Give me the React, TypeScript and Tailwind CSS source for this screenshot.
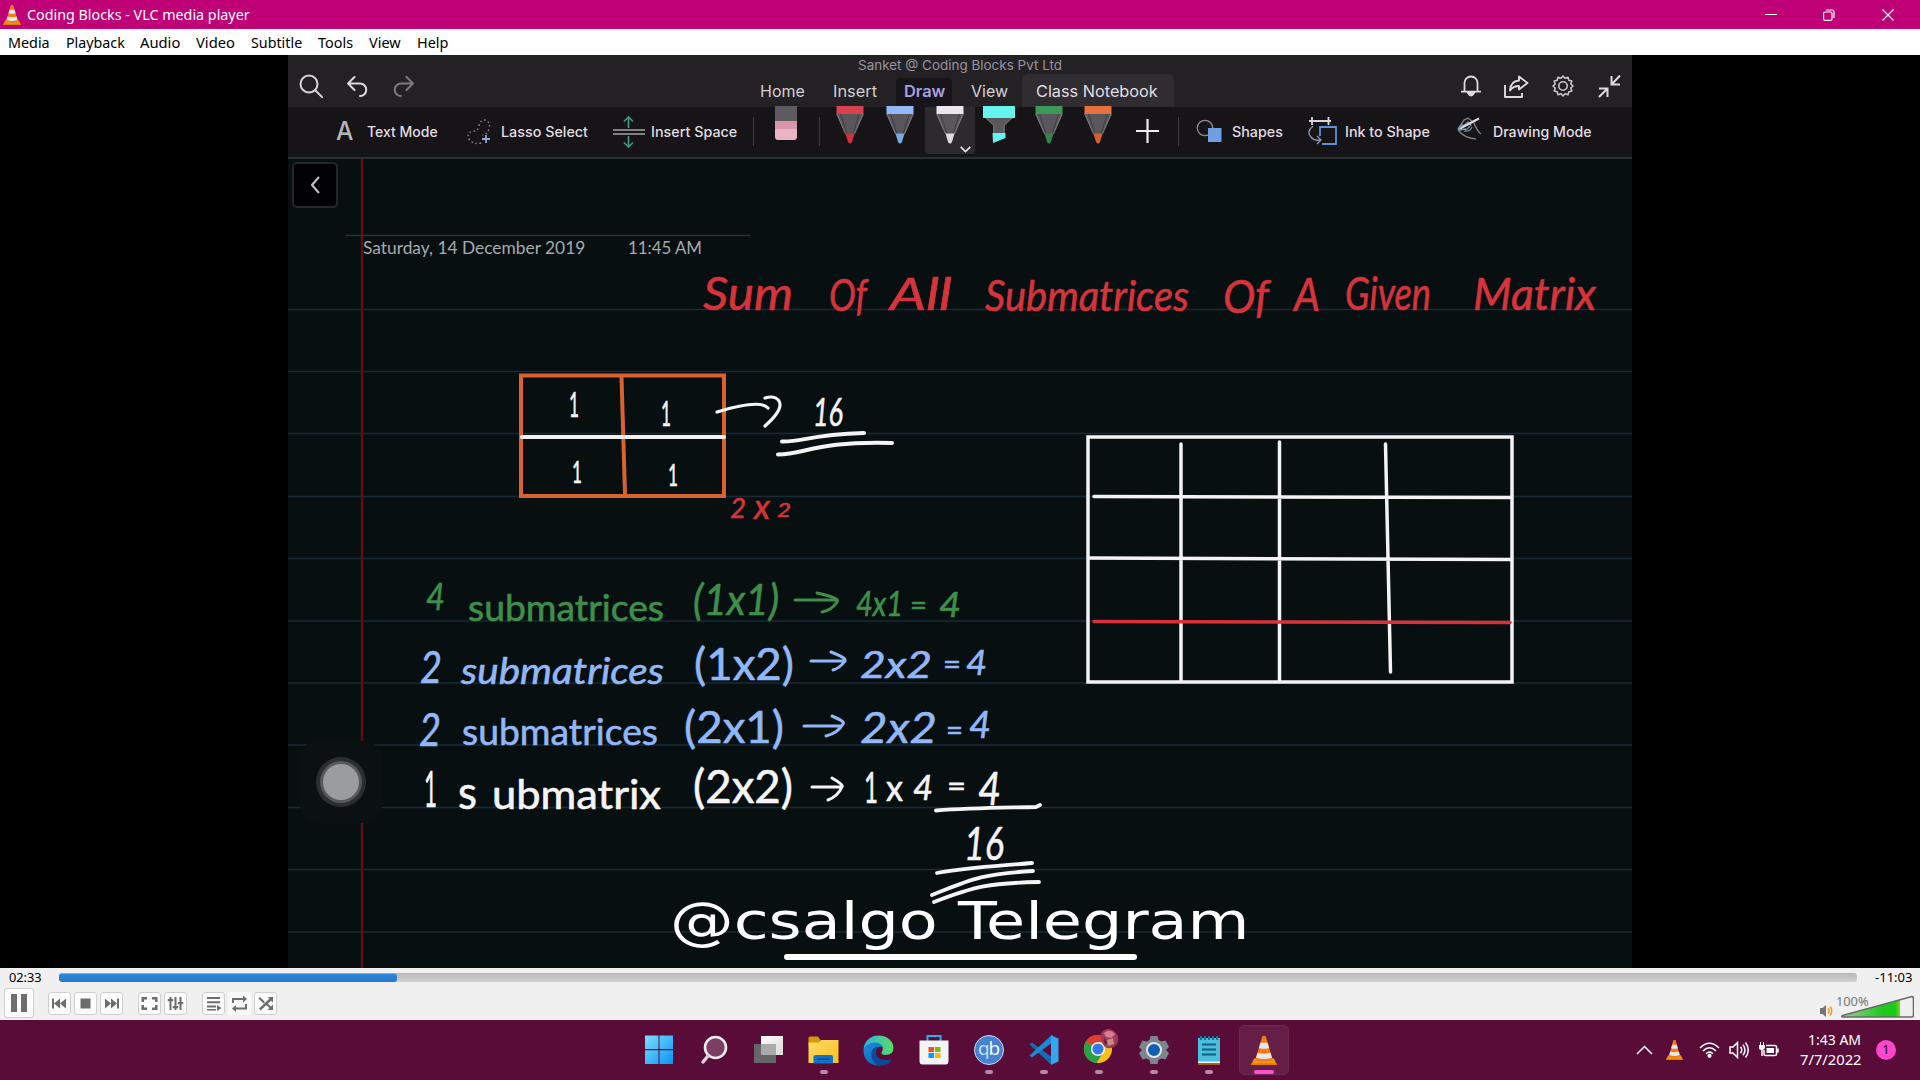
import React, { useLayoutEffect, useRef, useState } from "react";

/* Single line of text stretched to exactly the width of its box. */
function Fit({ children, className = "" }: { children: string; className?: string }) {
  const box = useRef<HTMLSpanElement>(null);
  const inner = useRef<HTMLSpanElement>(null);
  const [scale, setScale] = useState(1);
  useLayoutEffect(() => {
    if (box.current && inner.current) {
      const n = inner.current.offsetWidth;
      if (n) setScale(box.current.offsetWidth / n);
    }
  }, []);
  return (
    <span ref={box} className={"block shrink-0 whitespace-nowrap " + className}>
      <span ref={inner} className="inline-block origin-left" style={{ transform: `scaleX(${scale})` }}>
        {children}
      </span>
    </span>
  );
}

function Cone({ className = "" }: { className?: string }) {
  return (
    <svg viewBox="0 0 24 34" preserveAspectRatio="none" className={"shrink-0 " + className}>
      <path d="M3 26h18l3 8H0z" fill="#f39317" />
      <path d="M0 32h24v2H0z" fill="#e27a05" />
      <path d="M10.500 0h3L20 28q-8 4-16 0z" fill="#f47b13" />
      <path d="M8.700 8h6.600l1.400 6q-4.700 2-9.400 0zM6 19.500q6 2.500 12 0l1.400 6q-7.400 3-14.800 0z" fill="#e4e8ea" />
    </svg>
  );
}

const PENS = {
  red: ["#d9414f", "#d2303c"],
  blue: ["#93b9fb", "#7ba9e0"],
  white: ["#eee6ef", "#dedade"],
  green: ["#3d9a56", "#35824a"],
  orange: ["#e8703a", "#d65f2b"],
};

function Pen({ color }: { color: keyof typeof PENS }) {
  const [band, tip] = PENS[color];
  return (
    <svg width="28" height="38" viewBox="0 0 28 38" className="-mt-px shrink-0">
      <path d="M0 8h28L18.500 28h-9z" fill="#59575b" />
      <path d="M1 8l8.500 20M27 8l-8.500 20" stroke="#7b797d" strokeWidth="1" />
      <path d="M4.500 8l6.500 20M23.500 8L17 28" stroke="#3f3d41" strokeWidth="1" />
      <path d="M.5 0h27v8H.5z" fill={band} />
      <path d="M9.500 27.500h9L16 36q-2 3-4 0z" fill={tip} />
    </svg>
  );
}

function VideoHeader() {
  return (
    <div className="flex h-[52px] shrink-0 bg-[#232124] font-['Inter']">
      <div className="flex w-[472px] items-center pl-[11px] pt-[10px]">
        <svg width="24" height="24" viewBox="0 0 24 24" fill="none" stroke="#d6d3d8" strokeWidth="2" strokeLinecap="round">
          <circle cx="10" cy="10" r="8.500" />
          <path d="M16.500 16.500L23 23" />
        </svg>
        <svg width="21" height="21" viewBox="0 0 21 21" className="ml-[24px]" fill="none" stroke="#dedbe0" strokeWidth="2" strokeLinecap="round" strokeLinejoin="round">
          <path d="M7.500 1L1 7.500L7.500 14M1 7.500h12a6.200 6.200 0 0 1 0 12.500" />
        </svg>
        <svg width="21" height="21" viewBox="0 0 21 21" className="ml-[25px]" fill="none" stroke="#7c7a7e" strokeWidth="2" strokeLinecap="round" strokeLinejoin="round">
          <path d="M13.500 1L20 7.500L13.500 14M20 7.500H8a6.200 6.200 0 0 0 0 12.500" />
        </svg>
      </div>
      <div className="flex w-[460px] flex-col">
        <Fit className="ml-[98px] h-[19px] w-[204px] text-[13px] leading-[20px] text-[#98949f]">Sanket @ Coding Blocks Pvt Ltd</Fit>
        <div className="flex h-[33px] items-end text-[16px] leading-[22px] text-[#d3d0d5]">
          <Fit className="mb-[5px] w-[45px]">Home</Fit>
          <Fit className="mb-[5px] ml-[28px] w-[44px]">Insert</Fit>
          <div className="ml-[19px] flex h-[29px] w-[56px] items-end justify-center rounded-t bg-[#171519] font-semibold text-[#a9a0e0]">
            <Fit className="mb-[5px] w-[41px]">Draw</Fit>
          </div>
          <Fit className="mb-[5px] ml-[19px] w-[37px]">View</Fit>
          <div className="ml-[14px] flex h-[33px] w-[152px] items-end rounded-t-md bg-[#2f2d31] pl-[14px] text-[#e0dde2]">
            <Fit className="mb-[5px] w-[122px]">Class Notebook</Fit>
          </div>
        </div>
      </div>
      <div className="ml-auto flex items-start pr-[11px] pt-[20px]">
        <svg width="20" height="22" viewBox="0 0 20 22" fill="none" stroke="#dedbe0" strokeWidth="1.800">
          <path d="M3.500 16.500V8a6.500 6.500 0 0 1 13 0v8.500M0 16.700h20" />
          <path d="M7 18q3 5 6 0z" fill="#dedbe0" />
        </svg>
        <svg width="25" height="23" viewBox="0 0 25 23" className="ml-[23px]" fill="none" stroke="#dedbe0" strokeWidth="1.900" strokeLinejoin="round">
          <path d="M1 10v12h17v-4" />
          <path d="M15 1.500L23.500 8L15 14.500V11q-6 0-9 4.500Q6.500 6 15 5.500z" />
        </svg>
        <svg width="22" height="22" viewBox="0 0 22 22" className="ml-[23px]" fill="none" stroke="#c9c6cb" strokeWidth="1.600">
          <circle cx="11" cy="11" r="4.200" />
          <path strokeLinejoin="round" d="M11 1l2 2.200 3-1 .8 3 3 .8-1 3L21 11l-2.200 2 1 3-3 .8-.8 3-3-1L11 21l-2-2.200-3 1-.8-3-3-.8 1-3L1 11l2.200-2-1-3 3-.8.8-3 3 1z" />
        </svg>
        <svg width="23" height="23" viewBox="0 0 23 23" className="ml-[24px]" fill="none" stroke="#dedbe0" strokeWidth="2">
          <path d="M22 .5L14 9M13.500 1v8.500H22M1 22L9 14M1 13.500h8.500V22" />
        </svg>
      </div>
    </div>
  );
}

function Ribbon() {
  return (
    <div className="flex h-[52px] shrink-0 items-start border-b-2 border-[#2a3032] bg-[#161417] font-['Inter'] text-[14px] font-medium leading-[20px] text-[#e0dde2]">
      <Fit className="ml-[48px] mt-[11px] w-[17px] text-[26px] leading-[26px] text-[#b7b4b9]">A</Fit>
      <Fit className="ml-[14px] mt-[15px] w-[71px]">Text Mode</Fit>
      <svg width="24" height="26" viewBox="0 0 24 26" className="ml-[29px] mt-[12px] shrink-0" fill="none">
        <path d="M14 24Q6 26 2 20Q-1 13 6 12.500Q11 12 12 7Q13 1 18 1Q24 3 22 10Q20 16 15.500 16" stroke="#8f8c91" strokeWidth="1.400" strokeDasharray="1.500 2.600" />
        <path d="M19 16v8M15 20h8" stroke="#98a6dc" strokeWidth="1.800" />
      </svg>
      <Fit className="ml-[10px] mt-[15px] w-[87px]">Lasso Select</Fit>
      <svg width="32" height="32" viewBox="0 0 32 32" className="ml-[25px] mt-[9px] shrink-0" fill="none">
        <path d="M0 14h32M0 18h32" stroke="#a5a2a7" strokeWidth="1.500" />
        <path d="M15.500 12V1M11 5.500L15.500 1L20 5.500M15.500 20v10.500M11 26.500l4.500 4.500l4.500-4.500" stroke="#42947f" strokeWidth="1.700" />
      </svg>
      <Fit className="ml-[6px] mt-[15px] w-[86px]">Insert Space</Fit>
      <div className="ml-[16px] mt-[10px] h-[29px] w-px bg-[#3d3b3f]" />
      <div className="-mt-px ml-[21px] flex h-[34px] w-[22px] flex-col overflow-hidden rounded-b-[3px]">
        <div className="h-[15px] bg-[#5d5b5f]" />
        <div className="h-[8px] bg-[#d797a8]" />
        <div className="flex-1 bg-[#e9b5c4]" />
      </div>
      <div className="ml-[22px] mt-[10px] h-[29px] w-px bg-[#3d3b3f]" />
      <div className="ml-[16px] flex"><Pen color="red" /></div>
      <div className="ml-[22px] flex"><Pen color="blue" /></div>
      <div className="ml-[11px] flex h-[47px] w-[50px] items-start rounded-b bg-[#2c2a2e] pl-[11px]">
        <Pen color="white" />
        <svg width="11" height="7" viewBox="0 0 11 7" className="-ml-[4px] mt-[39px] shrink-0" fill="none" stroke="#e6e3e8" strokeWidth="1.700">
          <path d="M.7.8L5.500 5.500L10.300.8" />
        </svg>
      </div>
      <svg width="32" height="38" viewBox="0 0 32 38" className="-mt-px ml-[8px] shrink-0">
        <path d="M1 11h30l-9 8v9H10v-9z" fill="#59575b" />
        <path d="M3 12l8 7.500V27M29 12l-8 7.500V27" fill="none" stroke="#77757a" />
        <path d="M0 0h32v12H0z" fill="#66f3f0" />
        <path d="M9.500 27h13v5L10 37z" fill="#66f3f0" />
      </svg>
      <div className="ml-[20px] flex"><Pen color="green" /></div>
      <div className="ml-[21px] flex"><Pen color="orange" /></div>
      <svg width="23" height="24" viewBox="0 0 23 24" className="ml-[24px] mt-[12px] shrink-0" stroke="#f1eef3" strokeWidth="2.200">
        <path d="M0 12h23M11.500 0v24" />
      </svg>
      <div className="ml-[19px] mt-[10px] h-[29px] w-px bg-[#3d3b3f]" />
      <svg width="26" height="24" viewBox="0 0 26 24" className="ml-[17px] mt-[12px] shrink-0" fill="none">
        <circle cx="9" cy="9" r="7.700" stroke="#8f8c91" strokeWidth="1.300" />
        <path d="M12 9h13.500v14H12z" fill="#6f9ee2" />
      </svg>
      <Fit className="ml-[10px] mt-[15px] w-[51px]">Shapes</Fit>
      <svg width="29" height="30" viewBox="0 0 29 30" className="ml-[25px] mt-[9px] shrink-0" fill="none">
        <path d="M1 5h22M4 1v8M20.500 1v8" stroke="#d9d6db" strokeWidth="1.800" />
        <path d="M5 10Q-2 16 3 21Q6 25 12 24M9 20l4 4l-4 4" stroke="#8895aa" strokeWidth="1.400" />
        <path d="M12 20v-9h16v17H14" stroke="#5f8fd8" strokeWidth="1.800" />
      </svg>
      <Fit className="ml-[8px] mt-[15px] w-[85px]">Ink to Shape</Fit>
      <svg width="25" height="24" viewBox="0 0 25 24" className="ml-[27px] mt-[10px] shrink-0" fill="none" stroke="#777f88" strokeWidth="1.400">
        <path d="M1 12L7 3l4-2 6 5q3 8 7 11M1 13q6 8 18 9M4 11l7-6 3 3-6 6q5 1 7-4" />
        <path d="M2 12L22 1.500" stroke="#dcd9de" strokeWidth="2.200" />
        <path d="M1 12.500l5-5M2 13l7-1" stroke="#779fc0" />
      </svg>
      <Fit className="ml-[11px] mt-[15px] w-[98px]">Drawing Mode</Fit>
    </div>
  );
}

const RED = "#d6333b";
const GREEN = "#3f8f4a";
const BLUE = "#91b7f6";
const WHITE = "#f4f4f4";

type Word = [text: string, x: number, baseline: number, width: number, size: number, color: string, italic?: boolean];

const WORDS: Word[] = [
  ["Sum", 703, 310, 90, 46, RED, true],
  ["Of", 829, 311, 38, 44, RED, true],
  ["All", 890, 310, 62, 44, RED, true],
  ["Submatrices", 985, 311, 204, 42, RED, true],
  ["Of", 1223, 313, 46, 47, RED, true],
  ["A", 1294, 311, 26, 46, RED, true],
  ["Given", 1345, 310, 86, 46, RED, true],
  ["Matrix", 1473, 310, 123, 44, RED, true],
  ["1", 569, 417, 10, 34, WHITE],
  ["1", 661, 426, 10, 34, WHITE],
  ["1", 572, 483, 10, 30, WHITE],
  ["1", 668, 486, 10, 30, WHITE],
  ["16", 813, 426, 30, 38, WHITE, true],
  ["2", 730, 518, 16, 27, RED, true],
  ["x", 754, 519, 16, 34, RED, true],
  ["2", 777, 517, 14, 20, RED, true],
  ["4", 426, 610, 19, 36, GREEN, true],
  ["submatrices", 468, 621, 196, 37, GREEN],
  ["(1x1)", 693, 615, 86, 43, GREEN, true],
  ["4x1", 856, 616, 47, 35, GREEN, true],
  ["=", 910, 615, 17, 29, GREEN],
  ["4", 939, 617, 22, 35, GREEN, true],
  ["2", 420, 683, 22, 45, BLUE, true],
  ["submatrices", 461, 684, 203, 37, BLUE, true],
  ["(1x2)", 694, 680, 100, 45, BLUE],
  ["2x2", 860, 678, 72, 37, BLUE, true],
  ["=", 943, 674, 18, 29, BLUE],
  ["4", 966, 675, 21, 34, BLUE, true],
  ["2", 419, 746, 22, 46, BLUE, true],
  ["submatrices", 462, 745, 196, 37, BLUE],
  ["(2x1)", 684, 743, 100, 44, BLUE],
  ["2x2", 860, 743, 77, 42, BLUE, true],
  ["=", 946, 740, 17, 29, BLUE],
  ["4", 969, 738, 22, 37, BLUE, true],
  ["1", 424, 807, 13, 50, WHITE],
  ["s", 458, 809, 19, 46, WHITE],
  ["ubmatrix", 492, 809, 169, 40, WHITE],
  ["(2x2)", 693, 803, 100, 46, WHITE],
  ["1", 864, 803, 14, 42, WHITE],
  ["x", 886, 801, 17, 36, WHITE],
  ["4", 913, 800, 20, 35, WHITE, true],
  ["=", 947, 797, 19, 31, WHITE],
  ["4", 978, 805, 23, 47, WHITE, true],
  ["16", 964, 860, 40, 46, WHITE, true],
];

const RULES = [309.5, 371.5, 433.500, 496.500, 558.500, 621, 683, 745, 807.5, 869.5, 932];

function Ink() {
  return (
    <svg width="1344" height="809" viewBox="288 159 1344 809" className="absolute inset-0" fill="none" strokeLinecap="round" strokeLinejoin="round">
      {RULES.map((y) => (
        <path key={y} d={`M288 ${y}H1632`} stroke="#182a35" strokeWidth="1.600" />
      ))}
      <path d="M362 159V968" stroke="#5e0f13" strokeWidth="2.400" />
      <path d="M346 235.500H750" stroke="#2c3334" strokeWidth="1.500" />

      <g strokeLinejoin="miter" strokeWidth="4">
        <path d="M521 375.500H724V496H521zM621.500 377L625 494" stroke="#d9622f" />
        <path d="M522 437H724" stroke="#f0f0f2" />
      </g>
      <path d="M717 412Q760 399 768 408M765 398Q775 395 779 401Q784 409 765 426" stroke={WHITE} strokeWidth="3.200" />
      <path d="M782 441.500C804 442 806 435 864 433M778 454.500C806 454 816 441 892 443" stroke={WHITE} strokeWidth="4" />

      <g stroke="#f3f3f3" strokeWidth="3.500" strokeLinejoin="miter">
        <path d="M1088 437H1512V682H1088z" />
        <path d="M1094 496.500L1511 497.500M1090 558L1511 559.500M1181 444V681M1279.500 442V681M1385.500 444L1390.500 672" />
      </g>
      <path d="M1094 621.500L1510 622.500" stroke="#d9303a" strokeWidth="3.500" />

      <g strokeWidth="3">
        <path d="M795 600H836M817 593Q841 598 837 602Q832 610 822 612" stroke={GREEN} />
        <path d="M811 661H843M831 652Q847 658 845 661Q840 668 833 670" stroke={BLUE} />
        <path d="M804 726H840M832 716Q846 722 843 724Q838 733 826 736" stroke={BLUE} />
        <path d="M812 787H841M832 778Q844 785 842 787Q838 796 828 800" stroke={WHITE} />
      </g>
      <path d="M936 810.500C970 808 990 808 1036 807L1040 805M937 873C970 867 1000 866 1032 863M932 895C970 880 980 874 1033 871M934 902C975 886 990 883 1039 882" stroke={WHITE} strokeWidth="3.800" />

      {WORDS.map(([text, x, y, w, size, color, italic]) => (
        <text
          key={`${x}-${y}`}
          x={x}
          y={y}
          textLength={w}
          lengthAdjust="spacingAndGlyphs"
          fontSize={size}
          fill={color}
          stroke={color}
          strokeWidth="0.6"
          fontFamily="Lato, sans-serif"
          fontStyle={italic ? "italic" : "normal"}
        >
          {text}
        </text>
      ))}

      <path d="M787 957H1134" stroke="#fff" strokeWidth="6" />
    </svg>
  );
}

function Notebook() {
  return (
    <div className="relative flex-1 overflow-hidden bg-[#080f11]">
      <Ink />
      <div className="absolute left-[4px] top-[3px] flex h-[46px] w-[46px] items-center justify-center rounded-[5px] border-2 border-[#242729] bg-[#010103]">
        <svg width="9" height="18" viewBox="0 0 9 18" fill="none" stroke="#c4c1c9" strokeWidth="2">
          <path d="M8 1L1 9L8 17" />
        </svg>
      </div>
      <div className="absolute left-[75px] top-[78px] flex font-['Lato'] text-[17.500px] leading-[22px] text-[#a6abab]">
        <Fit className="w-[222px]">Saturday, 14 December 2019</Fit>
        <Fit className="ml-[43px] w-[74px]">11:45 AM</Fit>
      </div>
      <div className="absolute left-[12px] top-[582px] flex h-[82px] w-[82px] items-center justify-center rounded-[18px] bg-[#0b1113]">
        <div className="flex h-[50px] w-[50px] items-center justify-center rounded-full bg-[#2b2f31]">
          <div className="h-[36px] w-[36px] rounded-full bg-[#9b9c9d] ring-3 ring-[#56595a]" />
        </div>
      </div>
      <Fit className="absolute left-[382px] top-[731px] w-[580px] font-['DejaVu_Sans'] text-[52px] leading-[63px] text-white">
        @csalgo Telegram
      </Fit>
    </div>
  );
}

function PlayerButton({ children, className = "" }: { children: React.ReactNode; className?: string }) {
  return (
    <div className={"flex h-[23px] w-[23px] shrink-0 items-center justify-center rounded-[3px] border border-[#cfcfcf] bg-[#fdfdfd] " + className}>
      <svg width="17" height="17" viewBox="0 0 17 17" fill="#6d6d6d">{children}</svg>
    </div>
  );
}

function Controls() {
  return (
    <div className="flex h-[52px] shrink-0 flex-col bg-[#f0f0f0] font-['Noto_Sans'] text-[12px] text-black">
      <div className="flex h-[18px] items-center">
        <Fit className="ml-[9px] w-[33px] pt-px leading-[19px]">02:33</Fit>
        <div className="ml-[17px] h-[9px] w-[1798px] overflow-hidden rounded-[3px] bg-linear-to-b from-[#b9b9b9] to-[#d0d0d0]">
          <div className="h-full w-[338px] rounded-[3px] border-t border-[#7caad2] bg-linear-to-b from-[#2e87d8] to-[#2378ca]" />
        </div>
        <Fit className="ml-[18px] w-[38px] pt-px leading-[19px]">-11:03</Fit>
      </div>
      <div className="flex h-[34px] items-center pl-[4px]">
        <div className="flex h-[30px] w-[30px] shrink-0 items-center justify-center gap-[4px] rounded-[3px] border border-[#cfcfcf] bg-[#fdfdfd]">
          <div className="h-[18px] w-[6px] bg-[#6d6d6d]" />
          <div className="h-[18px] w-[6px] bg-[#6d6d6d]" />
        </div>
        <PlayerButton className="ml-[14px]"><path d="M1 3.500h2v10H1zM3 8.500l6-5v10zM9 8.500l6-5v10z" /></PlayerButton>
        <PlayerButton className="ml-[3px]"><path d="M3.500 3.500h10v10h-10z" /></PlayerButton>
        <PlayerButton className="ml-[3px]"><path d="M14 3.500h2v10h-2zM14 8.500l-6-5v10zM8 8.500l-6-5v10z" /></PlayerButton>
        <PlayerButton className="ml-[15px]">
          <path d="M.5 2H6v2.500H3V7H.5zM11 2h5.500v5H14V4.500h-3zM.5 10H3v2.500h3V15H.5zM14 10h2.500v5H11v-2.500h3z" />
        </PlayerButton>
        <PlayerButton className="ml-[3px]">
          <path d="M2.500 2h2v13h-2zM7.500 2h2v13h-2zM12.500 2h2v13h-2zM.8 4h5.400v2.200H.8zM5.800 11h5.400v2.200H5.800zM10.800 7h5.400v2.200h-5.400z" />
        </PlayerButton>
        <PlayerButton className="ml-[15px]"><path d="M2 2h13v2H2zM2 6.200h13v2H2zM2 10.400h9v2H2zM2 14h9v1.500H2zM12 10l4.500 3-4.500 3z" /></PlayerButton>
        <div className="ml-[3px] flex h-[23px] w-[23px] shrink-0 items-center justify-center rounded-[3px] bg-[#f9f9f9]">
          <svg width="17" height="17" viewBox="0 0 17 17" fill="none" stroke="#6d6d6d" strokeWidth="2">
            <path d="M2 8V4h11M15 9v4.500H4" />
            <path d="M12 .500l4 3.500-4 3.500zM5 10l-4 3.500L5 17z" fill="#6d6d6d" stroke="none" />
          </svg>
        </div>
        <PlayerButton className="ml-[3px]">
          <path d="M1.500 3.500L3 2l5 5-1.500 1.500zM2 13.500L12.500 3.500 10.500 2H16v5.500l-2-1.700L3.500 15.500zM9 10l1.500-1.500 3.500 3 2-2V15h-5.500l2-2z" />
        </PlayerButton>
        <div className="ml-auto mr-[6px] flex h-[34px] w-[94px] items-end">
          <svg width="14" height="12" viewBox="0 0 14 12" className="mb-[3px] shrink-0">
            <path d="M0 3h2.500L6 0v12L2.500 9H0z" fill="#757575" />
            <path d="M8 3.500q2 2.500 0 5M10 1.500q3.500 4.500 0 9" fill="none" stroke="#f09a2c" strokeWidth="1.600" />
          </svg>
          <div className="relative ml-[7px] h-[34px] w-[73px]">
            <svg width="73" height="23" viewBox="0 0 73 23" className="absolute bottom-[2px] left-0">
              <defs>
                <linearGradient id="vol" x1="0" x2="1">
                  <stop offset="0" stopColor="#95d295" />
                  <stop offset=".7" stopColor="#20c820" />
                  <stop offset=".92" stopColor="#17cc17" />
                  <stop offset="1" stopColor="#8ccc20" />
                </linearGradient>
              </defs>
              <path d="M1 21L59 4.500V22H1z" fill="url(#vol)" />
              <path d="M1.500 20.500L71 1.500q1.500 0 1.500 2V20q0 2-2 2H2q-2 0-.5-1.500z" fill="none" stroke="#6a6a6a" strokeWidth="1.600" />
            </svg>
            <Fit className="absolute -left-[5px] top-[7px] w-[33px] leading-[18px] text-[#767676]">100%</Fit>
          </div>
        </div>
      </div>
    </div>
  );
}

function Task({ children, dot, active }: { children: React.ReactNode; dot?: boolean; active?: boolean }) {
  return (
    <div className={"relative flex h-[50px] w-[50px] items-center justify-center rounded-[5px]" + (active ? " border border-[#6c2a4e] bg-[#651f47]" : "")}>
      {children}
      {dot && <div className="absolute bottom-[1px] left-[21px] h-[4px] w-[8px] rounded-full bg-[#b58aa4]" />}
      {active && <div className="absolute bottom-0 left-[14px] h-[4px] w-[20px] rounded-full bg-[#ff4fd2]" />}
    </div>
  );
}

function Taskbar() {
  return (
    <div className="flex h-[60px] shrink-0 items-center bg-[#580c37] text-white">
      <div className="ml-[633.5px] flex gap-[5px]">
        <Task>
          <svg width="30" height="30" viewBox="0 0 30 30">
            <linearGradient id="win" x1="0" y1="0" x2="1" y2="1"><stop offset="0" stopColor="#79e0ff" /><stop offset="1" stopColor="#0b92f4" /></linearGradient>
            <path d="M1 .5h13.500V14H1zM15.500.5H29V14H15.500zM1 15.200h13.500v13.800H1zM15.500 15.200H29v13.800H15.500z" fill="url(#win)" />
          </svg>
        </Task>
        <Task>
          <svg width="28" height="30" viewBox="0 0 28 30" fill="none" strokeLinecap="round">
            <circle cx="15.500" cy="12.500" r="10.500" fill="#7a3f63" stroke="#eeeaee" strokeWidth="2.600" />
            <path d="M8 21L3 27" stroke="#d8d3d8" strokeWidth="3.500" />
          </svg>
        </Task>
        <Task>
          <svg width="31" height="30" viewBox="0 0 31 30">
            <linearGradient id="tv" x1="0" y1="0" x2="1" y2="1"><stop offset="0" stopColor="#fff" /><stop offset="1" stopColor="#d9d9d9" /></linearGradient>
            <path d="M1 9h22v19H1z" fill="#666" />
            <path d="M8 1h22v19H8z" fill="url(#tv)" />
            <path d="M8 9h15v11H8z" fill="#aaa" />
          </svg>
        </Task>
        <Task dot>
          <svg width="31" height="28" viewBox="0 0 31 28">
            <linearGradient id="fold" x1="0" y1="0" x2="1" y2="1"><stop offset="0" stopColor="#ffdc68" /><stop offset="1" stopColor="#f7bd22" /></linearGradient>
            <path d="M.5 2q0-1.500 1.500-1.500h8L12.500 4v5H.5z" fill="#d9980c" />
            <path d="M.5 6.500h10.500L13 4h17.500v23H.5z" fill="url(#fold)" />
            <path d="M5.500 27.500V21q0-2 2-2h15.500q2 0 2 2v6.500z" fill="#1171c8" />
            <path d="M9 22.500h12.500v1.500H9z" fill="#0b4d96" />
          </svg>
        </Task>
        <Task>
          <svg width="31" height="31" viewBox="0 0 31 31">
            <linearGradient id="e1" x1="0" x2="1"><stop offset="0" stopColor="#2bb4e8" /><stop offset="1" stopColor="#5bdc5e" /></linearGradient>
            <linearGradient id="e2" x1="0" y1="0" x2="1" y2="1"><stop offset="0" stopColor="#1c8ee0" /><stop offset="1" stopColor="#0a56a8" /></linearGradient>
            <path d="M.5 14C2 5 8 .5 15.500.5 24 .5 30.500 6 30.500 13q0 7-8 7-4.500 0-4-3 2-2 1-5Q12 4 .5 14z" fill="url(#e1)" />
            <path d="M.5 14Q4 7.500 11.500 7.500q6 0 8.500 4.500-7-1-7.500 5 0 10 15.500 7.500Q24 30.500 16 30.500C6 30.500 0 24 .5 14z" fill="url(#e2)" />
            <path d="M12.500 17q-1-4 4-5-6-1-8 5-1 8 5.500 13Q28 31 28 24.500 13.500 27 12.500 17z" fill="#0b4a98" />
          </svg>
        </Task>
        <Task>
          <svg width="30" height="30" viewBox="0 0 30 30">
            <path d="M8.500 7V1h13v6" fill="none" stroke="#26b0ea" strokeWidth="2" />
            <path d="M.5 5.500h29V26q0 3.500-3 3.500h-23q-3 0-3-3.500z" fill="#f4f4f4" />
            <path d="M9.500 12H15v5H9.500z" fill="#f04e23" /><path d="M16 12h5.500v5H16z" fill="#7fba00" />
            <path d="M9.500 18H15v5H9.500z" fill="#00a3ee" /><path d="M16 18h5.500v5H16z" fill="#ffb900" />
          </svg>
        </Task>
        <Task dot>
          <div className="flex h-[30px] w-[30px] items-center justify-center rounded-full border-[1.500px] border-[#c8dcf4] bg-[#4682cf] pb-[3px] font-['Open_Sans'] text-[19px] leading-none tracking-[-1px]">
            <span className="text-[#c8e3ff]">q</span><span>b</span>
          </div>
        </Task>
        <Task dot>
          <svg width="30" height="30" viewBox="0 0 30 30">
            <path d="M.5 9.500L3 7.500 24 23v6.500L22 29.500z" fill="#0f6fb5" />
            <path d="M.5 20.500L3 22.500 24 7V.5L22 .5z" fill="#178bd3" />
            <path d="M22 .2l7.500 3.300v23L22 29.800z" fill="#35a7ee" />
          </svg>
        </Task>
        <Task dot>
          <svg width="38" height="38" viewBox="0 0 38 38" className="ml-[7px] -mt-[8px] shrink-0">
            <circle cx="15" cy="22" r="14" fill="#fbc116" />
            <path d="M15 22L3 14.500A14 14 0 0 1 27.500 15.500H15z" fill="#e33b2e" />
            <path d="M15 22L3 14.500A14 14 0 0 0 13.500 36L20 26z" fill="#2aa148" />
            <circle cx="15" cy="22" r="7" fill="#fff" />
            <circle cx="15" cy="22" r="5.600" fill="#3578e6" />
            <path d="M18 7q2-5 8-5 8 2 9 8 1 6-4 10-6 3-10-1-4-6-3-12z" fill="#9d3b58" />
            <path d="M21 6q6-5 11 1l-4 4-5-1z" fill="#d87c92" /><path d="M24 13l6-2 1 6-6 2z" fill="#c68d86" /><path d="M21 10l3 6-2 2z" fill="#5e1a32" />
          </svg>
        </Task>
        <Task dot>
          <svg width="30" height="30" viewBox="0 0 30 30">
            <path d="M11.500 1h7l1 4 3 1.500 4-1L30 12l-3 3 3 3-3.500 6.500-4-1-3 1.500-1 4h-7l-1-4-3-1.500-4 1L0 18l3-3-3-3 3.500-6.500 4 1L10.500 5z" fill="#7d858c" />
            <circle cx="15" cy="15" r="7" fill="#0f5fb5" stroke="#e2e6ea" strokeWidth="2" />
          </svg>
        </Task>
        <Task dot>
          <svg width="24" height="31" viewBox="0 0 24 31">
            <path d="M1 3h22v24H1z" fill="#4bbede" />
            <path d="M1 26.500h22v2H1z" fill="#f2f2f2" /><path d="M1 28.300h22V30H1z" fill="#a3591c" />
            <path d="M4 1v4M8 1v4M12 1v4M16 1v4M20 1v4" stroke="#15779a" strokeWidth="2" />
            <path d="M5 9.500h14M5 14.500h14M5 19.500h14" stroke="#135d7e" strokeWidth="1.800" />
          </svg>
        </Task>
        <Task active><Cone className="h-[29px] w-[26px]" /></Task>
      </div>
      <div className="ml-auto flex items-center pr-[24px]">
        <svg width="17" height="10" viewBox="0 0 17 10" fill="none" stroke="#fff" strokeWidth="1.500"><path d="M1 9l7.500-7.500L16 9" /></svg>
        <Cone className="ml-[13px] h-[20px] w-[17px]" />
        <svg width="21" height="16" viewBox="0 0 21 16" className="ml-[16px]" fill="none" stroke="#fff" strokeWidth="1.600">
          <path d="M1 6q9.500-9.500 19 0M4 9q6.500-6.500 13 0M7 11.800q3.500-3.500 7 0" />
          <circle cx="10.500" cy="13.800" r="1.300" fill="#fff" />
        </svg>
        <svg width="21" height="18" viewBox="0 0 21 18" className="ml-[9px]" fill="none" stroke="#fff" strokeWidth="1.500">
          <path d="M1 6h3l4.500-4.500v15L4 12H1zM11.500 5.800q2.500 3.200 0 6.400M14 3.600q4 5.400 0 10.800M16.500 1.500q5.500 7.500 0 15" />
        </svg>
        <svg width="21" height="18" viewBox="0 0 21 18" className="ml-[8px]" fill="none" stroke="#fff" strokeWidth="1.500">
          <path d="M8 4.500h9q1.500 0 1.500 1.500v7q0 1.500-1.500 1.500H7.500q-1.500 0-1.500-1.500V9M20 7.500v4" />
          <path d="M8.500 7H16v5H8.500zM1 4h6v3Q6 9 4 9 1 9 1 7zM2 1h1v3H2zM5 1h1v3H5z" fill="#fff" stroke="none" />
          <path d="M4 8v7" />
        </svg>
        <div className="ml-[21px] flex w-[61px] flex-col items-end font-['Noto_Sans'] text-[14px] leading-[20px]">
          <Fit className="w-[53px]">1:43 AM</Fit>
          <Fit className="w-[61px]">7/7/2022</Fit>
        </div>
        <div className="ml-[15px] flex h-[20px] w-[20px] items-center justify-center rounded-full bg-[#ff47cb] font-['Noto_Sans'] text-[12px] leading-none text-black">1</div>
      </div>
    </div>
  );
}

export default function App() {
  return (
    <div className="flex h-[1080px] w-[1920px] flex-col overflow-hidden bg-black">
      <div className="flex h-[29px] shrink-0 items-center bg-[#bf0077] text-white">
        <Cone className="ml-[3px] h-[20px] w-[18px]" />
        <Fit className="ml-[6px] w-[223px] font-['Noto_Sans'] text-[14.500px] leading-[28px] -mt-[2px]">Coding Blocks - VLC media player</Fit>
        <div className="ml-auto flex items-center pr-[26px]">
          <div className="h-px w-[12px] bg-white" />
          <svg width="12" height="12" viewBox="0 0 12 12" className="ml-[46px]" fill="none" stroke="#fff" strokeWidth="1.200">
            <rect x=".6" y="3" width="8.400" height="8.400" rx="1.500" />
            <path d="M3 1h6q2 0 2 2v6" />
          </svg>
          <svg width="12" height="12" viewBox="0 0 12 12" className="ml-[47px]" stroke="#fff" strokeWidth="1.200"><path d="M.5.5l11 11M11.500.5l-11 11" /></svg>
        </div>
      </div>
      <div className="flex h-[26px] shrink-0 items-center bg-white pl-[8px] pt-px font-['Noto_Sans'] text-[14px] leading-[26px] text-black">
        <Fit className="w-[42px]">Media</Fit>
        <Fit className="ml-[16px] w-[59px]">Playback</Fit>
        <Fit className="ml-[15px] w-[40px]">Audio</Fit>
        <Fit className="ml-[16px] w-[39px]">Video</Fit>
        <Fit className="ml-[16px] w-[51px]">Subtitle</Fit>
        <Fit className="ml-[16px] w-[35px]">Tools</Fit>
        <Fit className="ml-[16px] w-[32px]">View</Fit>
        <Fit className="ml-[16px] w-[32px]">Help</Fit>
      </div>
      <div className="flex h-[913px] shrink-0 justify-center bg-black">
        <div className="flex w-[1344px] flex-col">
          <VideoHeader />
          <Ribbon />
          <Notebook />
        </div>
      </div>
      <Controls />
      <Taskbar />
    </div>
  );
}
